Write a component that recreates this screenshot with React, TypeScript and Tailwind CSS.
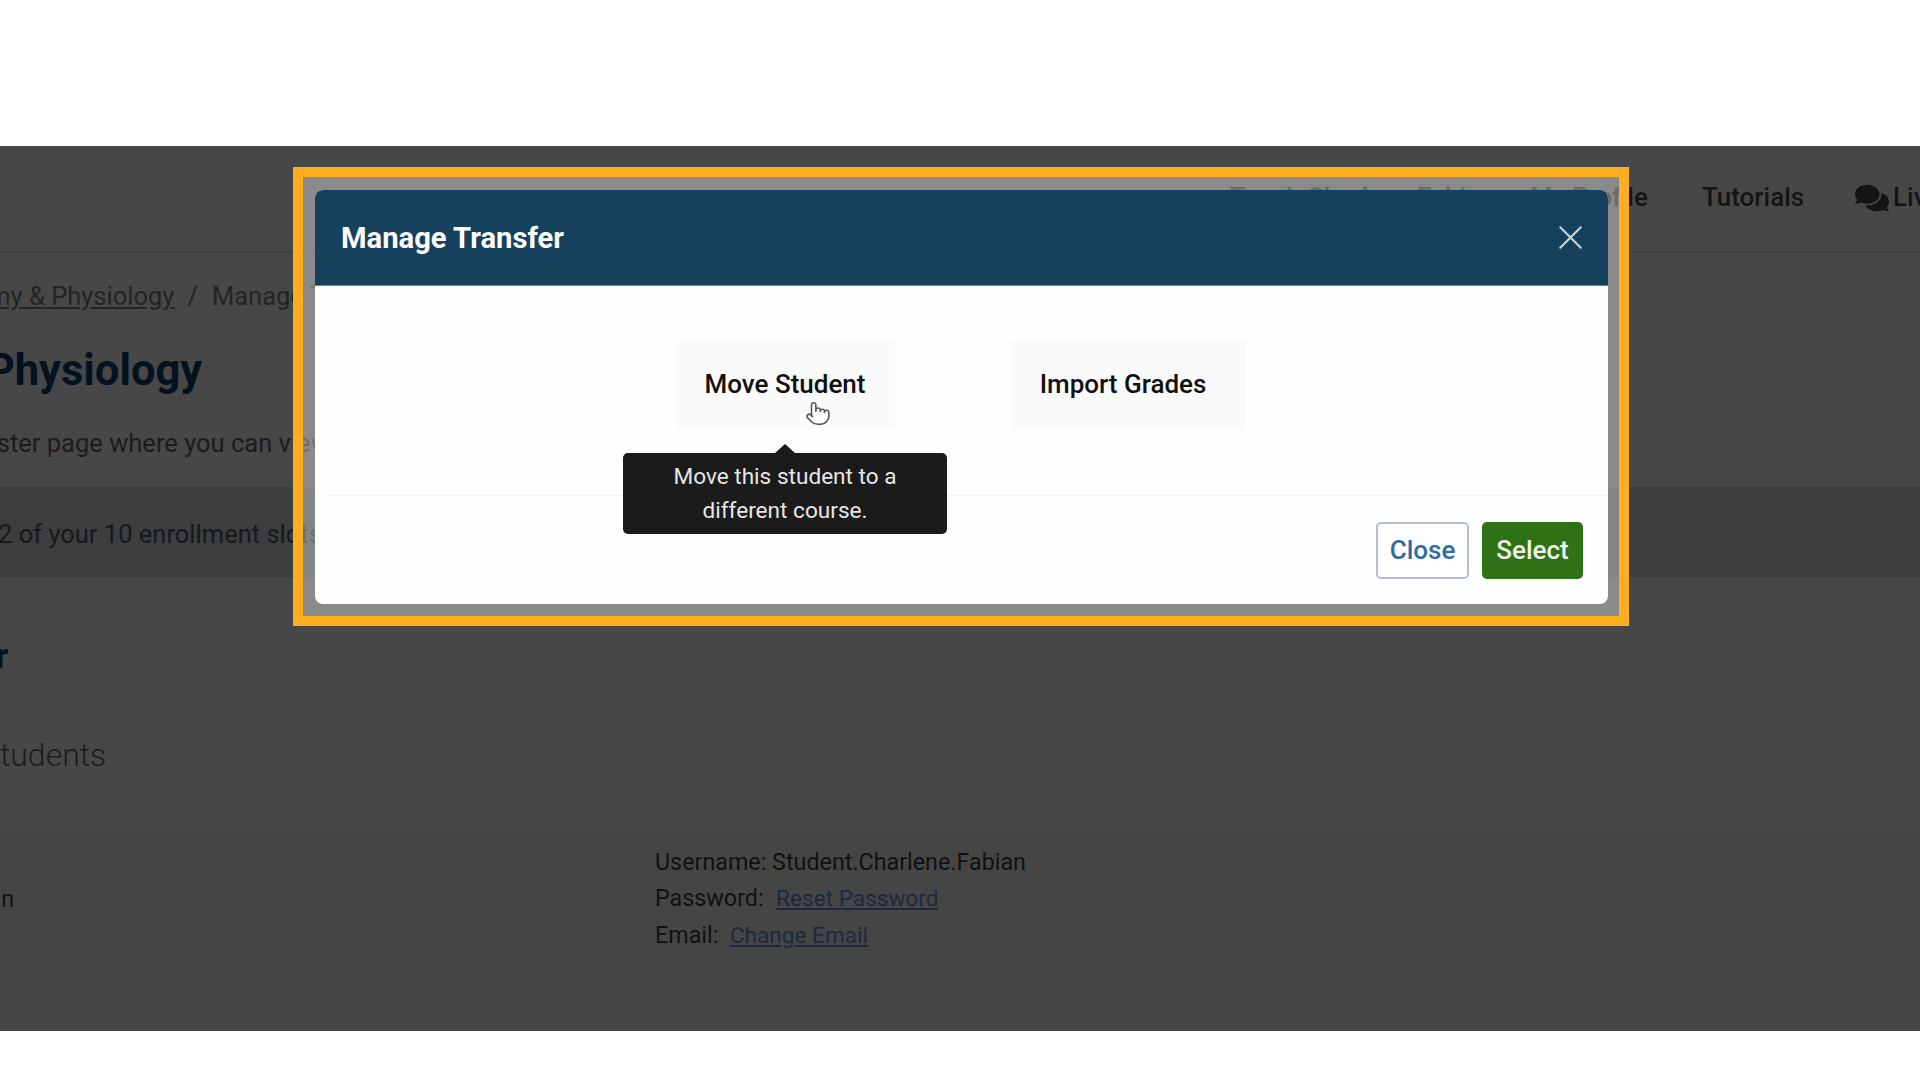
import { Pointer, X } from "lucide-react";
import { FaComments } from "react-icons/fa";

function ManageTransferModal() {
  return (
    <div className="absolute left-[293px] top-[167px] h-[459px] w-[1336px] border-[10px] border-[#ffae22] bg-white/[0.37] pl-[12px] pt-[13px]">
      <div className="relative h-[414px] w-[1293px] overflow-hidden rounded-lg bg-[#fefefe]">
        <div className="flex h-[96px] items-center justify-between border-b border-[#5f8296] bg-[#16415d] pl-[26px] pr-[17px]">
          <h2 className="pt-[2px] text-[29.2px] font-bold text-white">Manage Transfer</h2>
          <X className="h-[41px] w-[41px] text-[#c9d5dd]" strokeWidth={1.2} />
        </div>

        <div className="flex h-[209px] pl-[362px] pt-[54px]">
          <div className="flex h-[90px] w-[218px] items-center justify-center bg-[#fafafa] pb-[1px] pr-[2px] text-[26px] font-medium text-[#101010]">
            Move Student
          </div>
          <div className="ml-[116px] flex h-[90px] w-[235px] items-center justify-center bg-[#fafafa] pb-[1px] pr-[11px] text-[26px] font-medium text-[#101010]">
            Import Grades
          </div>
        </div>

        <div className="ml-[10px] flex h-[109px] justify-end gap-[13px] border-t border-[#f3f3f3] pr-[25px] pt-[26px]">
          <button className="h-[57px] w-[93px] rounded-[5px] border-2 border-[#b2bfd3] bg-white text-[26px] font-medium text-[#2f6ca3]">
            Close
          </button>
          <button className="h-[57px] w-[101px] rounded-[5px] bg-[#2f7116] text-[26px] font-medium text-[#eef5e8]">
            Select
          </button>
        </div>

        {/* tooltip over Move Student */}
        <div className="absolute left-[308px] top-[263px] flex h-[81px] w-[324px] items-center justify-center rounded-[5px] bg-[#1b1b1b] text-center text-[22.6px] leading-[34px] text-[#e6e6e6]">
          <span className="absolute -top-[9px] left-[152px] h-0 w-0 border-x-[10px] border-b-[9px] border-x-transparent border-b-[#1b1b1b]" />
          <span>
            Move this student to a
            <br />
            different course.
          </span>
        </div>

        <Pointer
          className="absolute left-[490px] top-[207px] h-[33px] w-[26px] fill-white text-[#555555]"
          strokeWidth={1.4}
        />
      </div>
    </div>
  );
}

export default function App() {
  return (
    <div className="relative h-[1080px] w-[1920px] overflow-hidden bg-white font-['Roboto',sans-serif]">
      <div className="h-[146px]" />

      <main className="h-[885px] overflow-hidden bg-[#484747] text-[#141414]">
        <nav className="flex h-[107px] items-center whitespace-nowrap border-b-2 border-[#414141] pb-[2px] pl-[1230px] text-[26px] font-medium">
          <span className="w-[300px] shrink-0">Teach Charlene Fabian</span>
          <span className="w-[172px] shrink-0">My Profile</span>
          <span className="w-[153px] shrink-0">Tutorials</span>
          <FaComments className="mr-[4px] h-[32px] w-[34px] shrink-0" />
          <span className="shrink-0">Live Chat</span>
        </nav>

        <div className="flex h-[86px] items-center whitespace-nowrap text-[25.5px] text-[#222426]">
          <a className="-ml-[79px] underline">Anatomy &amp; Physiology</a>
          <span className="ml-[13px]">/</span>
          <span className="ml-[14px]">Manage Transfer</span>
        </div>

        <h1 className="-ml-[238px] flex h-[65px] items-center whitespace-nowrap pb-[2px] text-[43.5px] font-bold text-[#04121f]">
          Anatomy &amp; Physiology
        </h1>

        <p className="-ml-[149px] flex h-[83px] items-center whitespace-nowrap pb-[5px] text-[25.5px] text-[#1c1c1c]">
          This is the roster page where you can view
        </p>

        <div className="flex h-[91px] items-center whitespace-nowrap border-b border-[#424344] bg-[#3b3d3e] pt-[5px] text-[25.5px] text-[#16191c]">
          <span className="-ml-[2px]">2 of your 10 enrollment slots</span>
        </div>

        <h2 className="-ml-[259px] flex h-[127px] items-center whitespace-nowrap border-b border-[#434343] pt-[32px] text-[35px] font-bold text-[#04121f]">
          Manage Transfer
        </h2>

        <div className="flex h-[128px] items-start pt-[26px] text-[32px] font-light text-[#1c1c1c]">
          <span className="-ml-[19px]">Students</span>
        </div>

        <div className="relative flex h-[198px] bg-[#464545] pt-[11px] text-[23.3px] leading-[36px] text-[#111111]">
          <span className="-ml-[153px] mt-[37px] w-[808px] shrink-0 whitespace-nowrap">Charlene Fabian</span>
          <div>
            <div>Username: Student.Charlene.Fabian</div>
            <div>
              Password:&nbsp; <a className="ml-[1px] text-[22.6px] text-[#1d2a3c] underline">Reset Password</a>
            </div>
            <div>
              Email:&nbsp; <a className="text-[22.6px] text-[#1d2a3c] underline">Change Email</a>
            </div>
          </div>
        </div>
      </main>

      <ManageTransferModal />
    </div>
  );
}
